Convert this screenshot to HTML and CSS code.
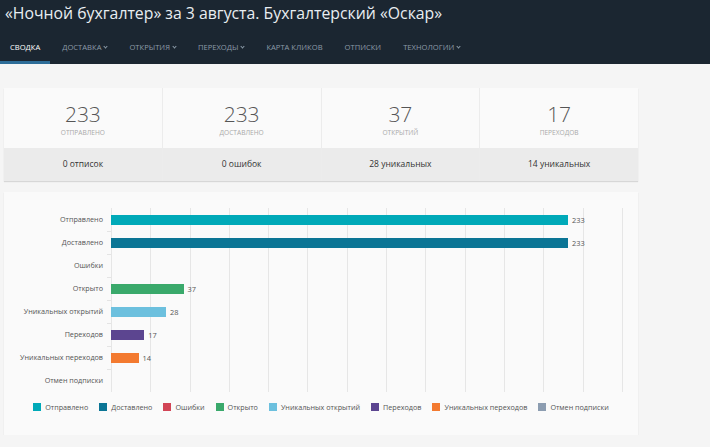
FILE: index.html
```html
<!DOCTYPE html>
<html lang="ru">

<head>
    <meta charset="UTF-8">
    <title>Сводка</title>
    <link rel="stylesheet" href="styles.css">
</head>

<body>
    <div class="header">
        <h1 class="title">«Ночной бухгалтер» за 3 августа. Бухгалтерский «Оскар»</h1>
        <ul class="nav">
            <li class="active">Сводка</li>
            <li>Доставка <span class="caret"></span></li>
            <li>Открытия <span class="caret"></span></li>
            <li>Переходы <span class="caret"></span></li>
            <li>Карта кликов</li>
            <li>Отписки</li>
            <li>Технологии <span class="caret"></span></li>
        </ul>
    </div>

    <div class="content">
        <div class="stats card">
            <div class="stat">
                <div class="stat_top">
                    <div class="num">233</div>
                    <div class="lbl">Отправлено</div>
                </div>
                <div class="stat_bottom">0 отписок</div>
            </div>
            <div class="stat">
                <div class="stat_top">
                    <div class="num">233</div>
                    <div class="lbl">Доставлено</div>
                </div>
                <div class="stat_bottom">0 ошибок</div>
            </div>
            <div class="stat">
                <div class="stat_top">
                    <div class="num">37</div>
                    <div class="lbl">Открытий</div>
                </div>
                <div class="stat_bottom">28 уникальных</div>
            </div>
            <div class="stat">
                <div class="stat_top">
                    <div class="num">17</div>
                    <div class="lbl">Переходов</div>
                </div>
                <div class="stat_bottom">14 уникальных</div>
            </div>
        </div>

        <div class="chart card">
            <div class="plot">
                <div class="labels">
                    <div>Отправлено</div>
                    <div>Доставлено</div>
                    <div>Ошибки</div>
                    <div>Открыто</div>
                    <div>Уникальных открытий</div>
                    <div>Переходов</div>
                    <div>Уникальных переходов</div>
                    <div>Отмен подписки</div>
                </div>
                <div class="bars">
                    <div class="row"><span class="bar c1" style="width: 457px"></span><span class="val">233</span></div>
                    <div class="row"><span class="bar c2" style="width: 457px"></span><span class="val">233</span></div>
                    <div class="row"></div>
                    <div class="row"><span class="bar c4" style="width: 72.5px"></span><span class="val">37</span></div>
                    <div class="row"><span class="bar c5" style="width: 55px"></span><span class="val">28</span></div>
                    <div class="row"><span class="bar c6" style="width: 33.3px"></span><span class="val">17</span></div>
                    <div class="row"><span class="bar c7" style="width: 27.5px"></span><span class="val">14</span></div>
                    <div class="row"></div>
                </div>
            </div>
            <div class="legend">
                <span><i class="c1"></i>Отправлено</span>
                <span><i class="c2"></i>Доставлено</span>
                <span><i class="c3"></i>Ошибки</span>
                <span><i class="c4"></i>Открыто</span>
                <span><i class="c5"></i>Уникальных открытий</span>
                <span><i class="c6"></i>Переходов</span>
                <span><i class="c7"></i>Уникальных переходов</span>
                <span><i class="c8"></i>Отмен подписки</span>
            </div>
        </div>
    </div>
</body>

</html>
```

FILE: styles.css
```css
* {
    margin: 0;
    padding: 0;
    box-sizing: border-box;
}

body {
    font-family: "Open Sans", "Noto Sans", sans-serif;
    background: #f5f5f5;
    color: #555;
}

.header {
    background: #1b2631;
    height: 64px;
    display: flex;
    flex-direction: column;
}

.title {
    font-weight: 400;
    font-size: 15.8px;
    line-height: 24px;
    color: #e9eef2;
    padding: 1px 0 0 5px;
}

.nav {
    list-style: none;
    display: flex;
    margin-top: auto;
    height: 31px;
}

.nav li {
    padding: 0 10px;
    margin-right: 2px;
    font-size: 7.6px;
    text-transform: uppercase;
    color: #8b9aa7;
    line-height: 28px;
    display: flex;
    align-items: flex-start;
    gap: 3px;
    border-bottom: 3px solid transparent;
}

.nav li.active {
    color: #fff;
    border-bottom-color: #2d6d98;
}

.caret {
    width: 3px;
    height: 3px;
    border-right: 1px solid #8b9aa7;
    border-bottom: 1px solid #8b9aa7;
    transform: rotate(45deg);
    margin-top: 12px;
}

.content {
    width: 634px;
    margin-left: 4px;
    padding-top: 24px;
}

.card {
    background: #fafafa;
    box-shadow: 0 1px 1px rgba(0, 0, 0, 0.12);
}

.stats {
    display: flex;
    height: 93px;
}

.stat {
    flex: 1;
    display: flex;
    flex-direction: column;
    text-align: center;
    border-right: 1px solid #ececec;
}

.stat:last-child {
    border-right: none;
}

.stat_top {
    height: 60px;
    padding-top: 14px;
}

.num {
    font-size: 21px;
    font-weight: 300;
    line-height: 24px;
    color: #555;
}

.lbl {
    font-size: 6.6px;
    text-transform: uppercase;
    color: #a9a9a9;
    margin-top: 2px;
}

.stat_bottom {
    flex: 1;
    background: #ebebeb;
    font-size: 8.5px;
    color: #333;
    line-height: 32px;
}

.chart {
    margin-top: 11px;
    height: 243px;
    padding-top: 16px;
}

.plot {
    display: flex;
    height: 184px;
}

.labels {
    width: 107px;
    display: flex;
    flex-direction: column;
    text-align: right;
    font-size: 7.2px;
    color: #555;
}

.labels div {
    flex: 1;
    line-height: 23px;
    padding-right: 8px;
    background: linear-gradient(#e4e4e4, #e4e4e4) right top / 4px 1px no-repeat;
}

.labels div:first-child {
    background: none;
}

.bars {
    width: 512px;
    display: flex;
    flex-direction: column;
    background: repeating-linear-gradient(to right, #e6e6e6 0, #e6e6e6 1px, transparent 1px, transparent 39.3px);
}

.row {
    flex: 1;
    display: flex;
    align-items: center;
}

.bar {
    height: 10px;
}

.val {
    font-size: 7.4px;
    color: #555;
    margin-left: 4px;
}

.legend {
    display: flex;
    justify-content: center;
    gap: 11px;
    margin-top: 10px;
    font-size: 7.2px;
    color: #555;
}

.legend span {
    display: flex;
    align-items: center;
    gap: 4px;
}

.legend i {
    width: 8px;
    height: 8px;
}

.c1 { background: #00a9b8; }
.c2 { background: #0b7595; }
.c3 { background: #d24556; }
.c4 { background: #3aa96b; }
.c5 { background: #6cc0de; }
.c6 { background: #5c4590; }
.c7 { background: #f37a30; }
.c8 { background: #8c9db1; }
```
